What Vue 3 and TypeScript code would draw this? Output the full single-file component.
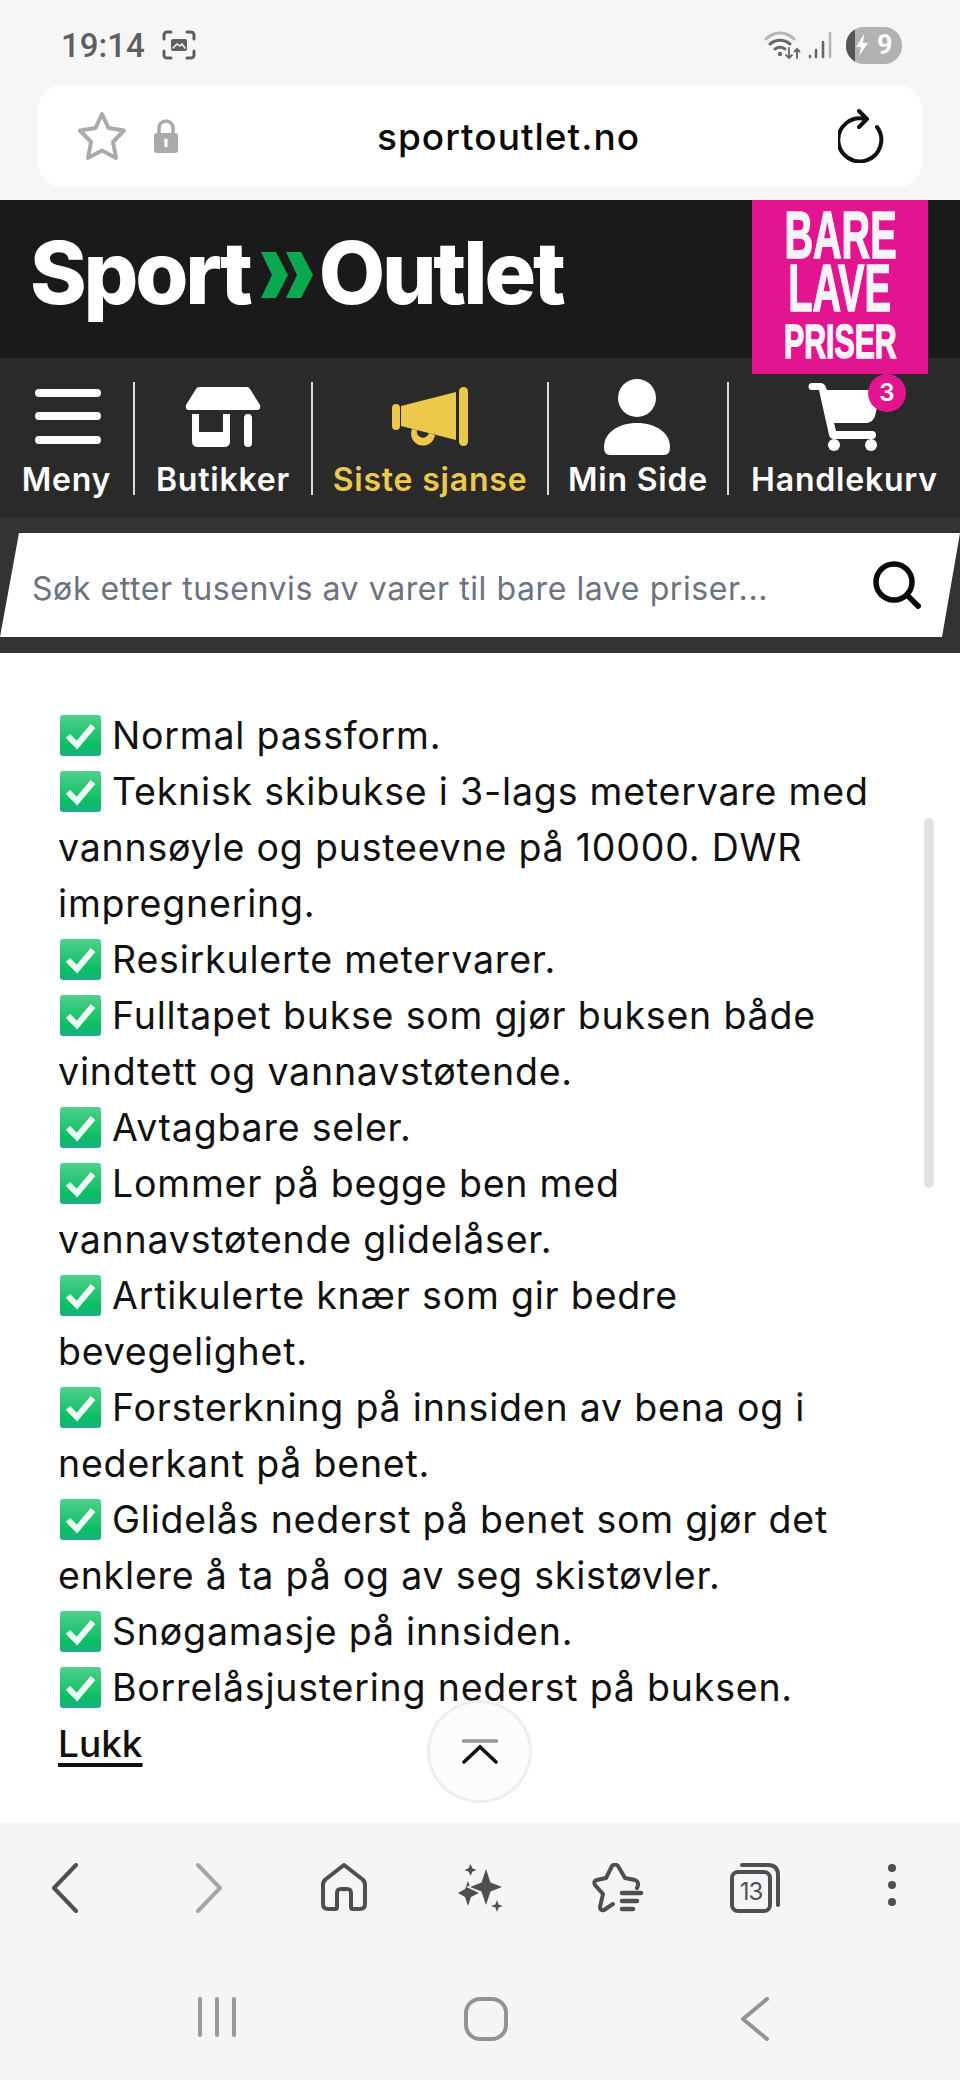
<script setup lang="ts">
const features: string[][] = [
  ['Normal passform.'],
  ['Teknisk skibukse i 3-lags metervare med', 'vannsøyle og pusteevne på 10000. DWR', 'impregnering.'],
  ['Resirkulerte metervarer.'],
  ['Fulltapet bukse som gjør buksen både', 'vindtett og vannavstøtende.'],
  ['Avtagbare seler.'],
  ['Lommer på begge ben med', 'vannavstøtende glidelåser.'],
  ['Artikulerte knær som gir bedre', 'bevegelighet.'],
  ['Forsterkning på innsiden av bena og i', 'nederkant på benet.'],
  ['Glidelås nederst på benet som gjør det', 'enklere å ta på og av seg skistøvler.'],
  ['Snøgamasje på innsiden.'],
  ['Borrelåsjustering nederst på buksen.'],
]
</script>

<template>
  <div class="page">
    <div class="chrome-top">
      <div class="status">
        <span class="time">19:14</span>
        <svg class="shot" width="34" height="30" viewBox="0 0 34 30" fill="none" stroke="#5f5f5f" stroke-width="3" stroke-linecap="round">
          <path d="M2 9V5a3 3 0 0 1 3-3h4M25 2h4a3 3 0 0 1 3 3v4M32 21v4a3 3 0 0 1-3 3h-4M9 28H5a3 3 0 0 1-3-3v-4" />
          <rect x="9" y="9" width="16" height="12" rx="2" fill="#5f5f5f" stroke="none" />
          <path d="M11 18l4-4 3 2 2-2 3 4" stroke="#f6f6f6" stroke-width="1.5" />
        </svg>
        <span class="status-right">
          <svg width="38" height="30" viewBox="0 0 38 30" fill="none" stroke-linecap="round">
            <path d="M2 9C10 1 22 1 30 9" stroke="#b5b5b5" stroke-width="3" />
            <path d="M6 14c6-5 14-5 20 0" stroke="#666" stroke-width="3" />
            <path d="M11 19c3-2 7-2 10 0" stroke="#666" stroke-width="3" />
            <circle cx="16" cy="24" r="2.2" fill="#666" />
            <path d="M25 18v10M22 25l3 3 3-3M33 28V19M30.500 21.500l2.500-2.500 2.500 2.500" stroke="#666" stroke-width="1.8" />
          </svg>
          <svg width="26" height="30" viewBox="0 0 26 30" fill="none" stroke-linecap="round" stroke-width="2.6">
            <path d="M3 26v1M9 20v7M16 12v15" stroke="#666" />
            <path d="M23 3v24" stroke="#b5b5b5" />
          </svg>
          <span class="battery">
            <span class="battery-fill">
              <svg width="14" height="22" viewBox="0 0 14 22"><path d="M9 0L1 13h5l-2 9 9-13H8z" fill="#fff" /></svg>
            </span>
            <span class="battery-num">9</span>
          </span>
        </span>
      </div>
      <div class="urlbar">
        <svg class="url-star" width="52" height="50" viewBox="0 0 52 50" fill="none" stroke="#aaa" stroke-width="4" stroke-linejoin="round">
          <path d="M26 3l6.500 14 15.500 2.500-11 11.500 3 16-14-7.500-14 7.500 3-16L4 19.500l15.500-2.500z" />
        </svg>
        <svg class="url-lock" width="26" height="34" viewBox="0 0 26 34">
          <path d="M6 15V9a7 7 0 0 1 14 0v6" fill="none" stroke="#aaa" stroke-width="3.500" />
          <rect x="1" y="14" width="24" height="20" rx="3" fill="#aaa" />
          <path d="M13 19l3 3h-1.500v6h-3v-6H10z" fill="#fff" />
        </svg>
        <span class="url-text">sportoutlet.no</span>
        <svg class="url-reload" width="46" height="54" viewBox="0 0 46 54" fill="none" stroke="#111" stroke-width="4" stroke-linecap="round" stroke-linejoin="round">
          <path d="M27 10A21.500 21.500 0 1 0 39 18" />
          <path d="M21 2l8 8-8 8" />
        </svg>
      </div>
    </div>

    <header class="site-header">
      <div class="logo">
        <span>Sport</span>
        <svg class="logo-arrows" width="52" height="46" viewBox="0 0 52 46" fill="#0ba94f">
          <path d="M0 0h15l12 23-12 23H0l11-23zM25 0h15l12 23-12 23H25l11-23z" />
        </svg>
        <span>Outlet</span>
      </div>
      <div class="promo">
        <span class="promo-big">BARE</span>
        <span class="promo-big">LAVE</span>
        <span class="promo-small">PRISER</span>
      </div>
    </header>

    <nav class="site-nav">
      <div class="nav-item nav-menu">
        <svg width="66" height="56" viewBox="0 0 66 56" fill="#fff">
          <rect x="0" y="0" width="66" height="8" rx="4" />
          <rect x="0" y="23" width="66" height="8" rx="4" />
          <rect x="0" y="47" width="66" height="8" rx="4" />
        </svg>
        <span>Meny</span>
      </div>
      <div class="nav-item nav-shops">
        <svg width="76" height="62" viewBox="0 0 76 62" fill="#fff">
          <path d="M14 0h48a4 4 0 0 1 3 2l10 16q1 5-3 5H4q-4 0-3-5L11 2a4 4 0 0 1 3-2z" />
          <path d="M7 27h7v18h24V27h7v27q0 6-6 6H13q-6 0-6-6z" />
          <rect x="59" y="27" width="8" height="33" rx="4" />
        </svg>
        <span>Butikker</span>
      </div>
      <div class="nav-item nav-last">
        <svg width="76" height="60" viewBox="0 0 76 60" fill="#ecc94b">
          <rect x="67" y="0" width="9" height="59" rx="4.500" />
          <path d="M64 5v48L9 39V19z" />
          <rect x="0" y="17" width="8" height="26" rx="4" />
          <path d="M20 42a12 12 0 1 0 23 6l-6-2a6 6 0 1 1-12-3z" />
        </svg>
        <span class="nav-yellow">Siste sjanse</span>
      </div>
      <div class="nav-item nav-mine">
        <svg width="66" height="76" viewBox="0 0 66 76" fill="#fff">
          <circle cx="33" cy="19" r="19" />
          <path d="M0 68C0 54 14 44 33 44s33 10 33 24q0 8-6 8H6q-6 0-6-8z" />
        </svg>
        <span>Min Side</span>
      </div>
      <div class="nav-item nav-cart">
        <span class="cart-wrap">
          <svg width="74" height="68" viewBox="0 0 74 68" fill="#fff">
            <path d="M5 0h8q5 0 6 5l1 2h50q4 0 3 5l-5 21q-2 6-8 7H27l2 8h36a3.500 3.500 0 0 1 0 8H27q-4 0-5-4L12 7H5a3.500 3.500 0 0 1 0-7z" />
            <circle cx="27" cy="62" r="6" />
            <circle cx="64" cy="62" r="6" />
          </svg>
          <span class="cart-badge">3</span>
        </span>
        <span>Handlekurv</span>
      </div>
    </nav>

    <div class="search">
      <div class="search-field">
        <span class="search-text">Søk etter tusenvis av varer til bare lave priser...</span>
        <svg width="48" height="48" viewBox="0 0 48 48" fill="none" stroke="#0a0a0a" stroke-width="5.500" stroke-linecap="square">
          <circle cx="21" cy="21" r="18" />
          <path d="M35 35l10 10" />
        </svg>
      </div>
    </div>

    <main class="content">
      <template v-for="(item, i) in features" :key="i">
        <div v-for="(line, j) in item" :key="j" class="line">
          <svg v-if="j === 0" class="check" width="41" height="41" viewBox="0 0 41 41">
            <defs>
              <linearGradient :id="'chk' + i" x1="0" y1="0" x2="0" y2="1">
                <stop offset="0" stop-color="#4fd08b" />
                <stop offset="0.75" stop-color="#08bf63" />
                <stop offset="1" stop-color="#1eab8c" />
              </linearGradient>
            </defs>
            <rect width="41" height="41" rx="3" :fill="'url(#chk' + i + ')'" />
            <path d="M8 21l9 9L33 11" fill="none" stroke="#eefaf3" stroke-width="6" />
          </svg>{{ line }}
        </div>
      </template>
      <a class="close">Lukk</a>
      <div class="scrollbar"></div>
      <div class="to-top">
        <svg width="36" height="26" viewBox="0 0 36 26" fill="none" stroke-width="3.500" stroke-linecap="round">
          <path d="M1 2h34" stroke="#9a9a9a" />
          <path d="M2 23L18 8l16 15" stroke="#111" />
        </svg>
      </div>
    </main>

    <div class="browser-bar">
      <svg width="26" height="50" viewBox="0 0 26 50" fill="none" stroke="#4f4f53" stroke-width="4" stroke-linecap="round" stroke-linejoin="round">
        <path d="M24 2L2 25l22 23" />
      </svg>
      <svg width="26" height="50" viewBox="0 0 26 50" fill="none" stroke="#a6a6a8" stroke-width="4" stroke-linecap="round" stroke-linejoin="round">
        <path d="M2 2l22 23L2 48" />
      </svg>
      <svg width="46" height="48" viewBox="0 0 46 48" fill="none" stroke="#4f4f53" stroke-width="4" stroke-linejoin="round">
        <path d="M23 2L5 16q-3 2-3 6v19q0 5 5 5h7q2 0 2-2V30q0-4 4-4h6q4 0 4 4v14q0 2 2 2h7q5 0 5-5V22q0-4-3-6z" />
      </svg>
      <svg width="46" height="50" viewBox="0 0 46 50" fill="#4f4f53">
        <path d="M10 18l3 8 8 4-8 4-3 9-3-9-7-4 7-4z" />
        <path d="M28 6l4.500 13.500L44 24l-11.500 4.500L28 42l-4.500-13.500L12 24l11.500-4.500z" stroke="#f5f5f6" stroke-width="3" paint-order="stroke" />
        <path d="M12.500 1l1.800 4.200L18.500 7l-4.200 1.800L12.500 13l-1.800-4.200L6.500 7l4.200-1.800z" />
        <path d="M39 37l1.600 4.400L45 43l-4.400 1.600L39 49l-1.600-4.400L33 43l4.400-1.600z" />
      </svg>
      <svg width="52" height="50" viewBox="0 0 52 50" fill="none" stroke="#4f4f53" stroke-width="4" stroke-linecap="round" stroke-linejoin="round">
        <path d="M45 25q3-6-2-8L33 15 26 3q-3-3-6 0L14 15 5 17q-4 1-2 5l8 9-3 13q0 4 4 3l9-6" />
        <path d="M30 30h19M30 38h15M30 46h11" stroke-width="4.500" />
      </svg>
      <svg width="50" height="50" viewBox="0 0 50 50" fill="none" stroke="#4f4f53" stroke-width="4" stroke-linecap="round">
        <path d="M12 2h26q10 0 10 10v30" />
        <rect x="2" y="9" width="38" height="39" rx="6" />
        <text x="21" y="37" font-size="24" letter-spacing="-1" font-family="Inter, sans-serif" fill="#4f4f53" stroke="none" text-anchor="middle">13</text>
      </svg>
      <svg width="10" height="44" viewBox="0 0 10 44" fill="#4f4f53">
        <circle cx="5" cy="5" r="4" />
        <circle cx="5" cy="22" r="4" />
        <circle cx="5" cy="39" r="4" />
      </svg>
    </div>

    <div class="system-bar">
      <svg width="38" height="40" viewBox="0 0 38 40" stroke="#999" stroke-width="4" stroke-linecap="round">
        <path d="M2 2v36M19 2v36M36 2v36" />
      </svg>
      <svg width="44" height="44" viewBox="0 0 44 44" fill="none" stroke="#939393" stroke-width="4">
        <rect x="2" y="2" width="40" height="40" rx="14" />
      </svg>
      <svg width="28" height="44" viewBox="0 0 28 44" fill="none" stroke="#939393" stroke-width="4" stroke-linecap="round" stroke-linejoin="round">
        <path d="M26 2L2 22l24 20" />
      </svg>
    </div>
  </div>
</template>

<style>
html, body { margin: 0; background: #fff; }
</style>

<style scoped>
.page {
  width: 960px;
  height: 2080px;
  overflow: hidden;
  display: flex;
  flex-direction: column;
  font-family: Inter, "Noto Sans", sans-serif;
  color: #111;
}

.chrome-top {
  height: 200px;
  background: #f6f6f6;
  box-sizing: border-box;
  padding: 0 38px;
}
.status {
  height: 85px;
  display: flex;
  align-items: center;
  padding: 5px 20px 0 23px;
  box-sizing: border-box;
  color: #5f5f5f;
}
.time {
  font: 500 33px Roboto, sans-serif;
}
.shot { margin-left: 17px; }
.status-right {
  margin-left: auto;
  display: flex;
  align-items: center;
  gap: 5px;
}
.battery {
  width: 56px;
  height: 37px;
  border-radius: 18px;
  background: #b2b2b2;
  overflow: hidden;
  display: flex;
  align-items: center;
  margin-left: 8px;
}
.battery-fill {
  width: 25px;
  height: 37px;
  background: linear-gradient(90deg, #555 0 9px, transparent 9px);
  display: flex;
  align-items: center;
  justify-content: center;
  padding-left: 6px;
  box-sizing: border-box;
}
.battery-num {
  font: 700 27px Roboto, sans-serif;
  color: #fff;
  margin-left: 6px;
}

.urlbar {
  height: 102px;
  background: #fff;
  border-radius: 24px;
  position: relative;
  display: flex;
  align-items: center;
  padding: 0 38px 0 38px;
}
.url-lock { margin-left: 25px; }
.url-text {
  flex: 1;
  text-align: center;
  font: 500 37px Inter, sans-serif;
  color: #0a0a0a;
  letter-spacing: 1px;
}

.site-header {
  height: 158px;
  background: #1a1a1a;
  position: relative;
  display: flex;
  padding-left: 30px;
  box-sizing: border-box;
}
.logo {
  display: flex;
  align-items: center;
  height: 158px;
  padding-bottom: 12px;
  box-sizing: border-box;
  font: 800 86px Inter, sans-serif;
  color: #fff;
  letter-spacing: -3.2px;
}
.logo-arrows { margin: 4px 6px 0 11px; }
.promo {
  position: absolute;
  left: 752px;
  top: 0;
  width: 176px;
  height: 174px;
  background: #e3148f;
  z-index: 2;
  color: #f8f4f6;
  display: flex;
  flex-direction: column;
  align-items: center;
  font-family: "Liberation Sans Narrow", "Liberation Sans", sans-serif;
  font-weight: 700;
  padding-top: 9px;
  box-sizing: border-box;
  -webkit-text-stroke: 1.5px #f8f4f6;
}
.promo-big {
  font-size: 66px;
  line-height: 53px;
  transform: scaleX(0.6);
}
.promo-small {
  font-size: 48px;
  line-height: 54px;
  transform: scaleX(0.63);
}

.site-nav {
  height: 159px;
  background: #2a2a2a;
  display: grid;
  grid-template-columns: 133px 178px 236px 180px 233px;
  box-sizing: border-box;
  padding-top: 24px;
  color: #fff;
}
.nav-item {
  position: relative;
  height: 113px;
  display: flex;
  flex-direction: column;
  align-items: center;
  justify-content: flex-end;
  font: 600 32px Inter, sans-serif;
  letter-spacing: 0.8px;
  white-space: nowrap;
}
.nav-item > span:last-child {
  position: relative;
  top: 4px;
}
.nav-item + .nav-item { border-left: 2px solid #ddd; }
.nav-item svg { position: absolute; }
.nav-menu svg { top: 7px; left: 35px; }
.nav-shops svg { top: 5px; left: 50px; }
.nav-last svg { top: 5px; left: 79px; }
.nav-mine svg { top: -3px; left: 55px; }
.nav-yellow { color: #ecc94b; }
.cart-wrap {
  position: absolute;
  top: 1px;
  left: 78px;
  width: 74px;
  height: 68px;
}
.cart-wrap svg { position: static; }
.cart-badge {
  position: absolute;
  left: 61px;
  top: -9px;
  width: 38px;
  height: 38px;
  border-radius: 50%;
  background: #e3148f;
  color: #fff;
  font: 600 24px/38px Inter, sans-serif;
  letter-spacing: 0;
  text-align: center;
}

.search {
  height: 136px;
  background: #333;
  flex-shrink: 0;
  box-sizing: border-box;
  padding-top: 16px;
}
.search-field {
  height: 104px;
  background: #fff;
  clip-path: polygon(19px 0, 960px 0, 942px 104px, 0 104px);
  display: flex;
  align-items: center;
  padding: 0 39px 0 32px;
  justify-content: space-between;
}
.search-text {
  font: 400 32px Inter, sans-serif;
  color: #6b7280;
  letter-spacing: 0.58px;
  position: relative;
  top: 3px;
}

.content {
  height: 1170px;
  position: relative;
  padding: 55px 0 0 58px;
  box-sizing: border-box;
  background: #fff;
  font: 400 37.500px/56px Inter, sans-serif;
  color: #111;
}
.line {
  white-space: nowrap;
  height: 56px;
  letter-spacing: 0.8px;
}
.check {
  vertical-align: -7px;
  margin: 0 11px 0 2px;
}
.close {
  display: block;
  font-weight: 500;
  font-size: 37px;
  text-decoration: underline;
  text-underline-offset: 6px;
  text-decoration-thickness: 4px;
}
.scrollbar {
  position: absolute;
  left: 924px;
  top: 165px;
  width: 10px;
  height: 370px;
  border-radius: 5px;
  background: #e2e2e2;
}
.to-top {
  position: absolute;
  left: 427px;
  top: 1047px;
  width: 105px;
  height: 103px;
  box-sizing: border-box;
  border: 3px solid #eee;
  border-radius: 50%;
  background: rgba(252, 252, 252, 0.88);
  display: flex;
  align-items: center;
  justify-content: center;
}

.browser-bar {
  height: 150px;
  background: #f5f5f6;
  display: grid;
  grid-template-columns: 130px 158px 112px 162px 112px 162px 112px;
  justify-items: center;
  align-items: start;
  padding-top: 40px;
  box-sizing: border-box;
}
.system-bar {
  flex: 1;
  background: #f5f5f6;
  display: grid;
  grid-template-columns: repeat(3, 269px);
  justify-content: center;
  justify-items: center;
  align-items: start;
  padding: 24px 0 0 12px;
}
</style>
